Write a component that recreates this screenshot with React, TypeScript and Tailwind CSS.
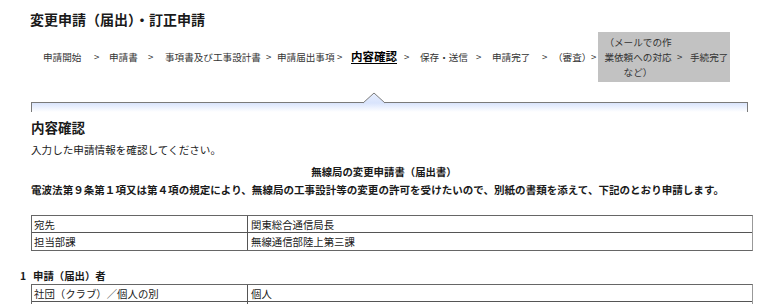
const steps: { label: string; w: number; current?: boolean }[] = [
  { label: "申請開始", w: 51 },
  { label: ">", w: 15 },
  { label: "申請書", w: 39 },
  { label: ">", w: 17 },
  { label: "事項書及び工事設計書", w: 101 },
  { label: ">", w: 11 },
  { label: "申請届出事項", w: 60 },
  { label: ">", w: 14 },
  { label: "内容確認", w: 53, current: true },
  { label: ">", w: 16 },
  { label: "保存・送信", w: 56 },
  { label: ">", w: 16 },
  { label: "申請完了", w: 50 },
  { label: ">", w: 11 },
  { label: "（審査）", w: 38 },
  { label: ">", w: 7 },
];

function InfoTable({ rows }: { rows: [string, string][] }) {
  return (
    <div className="ml-[31px] w-[722px] border border-[#666] border-r-[#999]">
      {rows.map(([k, v], i) => (
        <div
          key={i}
          className={`flex h-[17px] items-center text-[10.4px] leading-[17px] ${
            i < rows.length - 1 ? "border-b border-[#555]" : ""
          }`}
        >
          <div className="w-[216px] h-full pl-[2px] border-r border-[#555]">{k}</div>
          <div className="flex-1 pl-[3px]">{v}</div>
        </div>
      ))}
    </div>
  );
}

export default function App() {
  return (
    <div className="w-[780px] h-[304px] overflow-hidden bg-white text-[#1a1a1a] font-['Noto_Sans_CJK_JP',sans-serif]">
      <h1 className="pl-[30px] pt-[10px] text-[14px] font-bold leading-[18px]">
        変更申請（届出）・訂正申請
      </h1>

      {/* Progress steps */}
      <div className="mt-[4px] flex h-[50px] items-center pl-[43px] text-[9.6px] text-[#333]">
        {steps.map((s, i) => (
          <span
            key={i}
            style={{ width: s.w }}
            className={`shrink-0 whitespace-nowrap ${
              s.current ? "text-[11.5px] font-bold text-black underline underline-offset-2" : ""
            }`}
          >
            {s.label}
          </span>
        ))}
        <div className="flex h-[50px] w-[132px] shrink-0 items-center bg-[#c2c2c2] pl-[4px]">
          <span className="w-[72px] shrink-0 text-center leading-[15px]">
            （メールでの作業依頼への対応など）
          </span>
          <span className="ml-[3px] w-[13px] shrink-0">&gt;</span>
          <span className="whitespace-nowrap">手続完了</span>
        </div>
      </div>

      {/* Speech-bubble panel */}
      <div className="relative ml-[31px] mt-[20px] h-[10px] w-[717px] border-x border-t border-[#7a7a7a] bg-gradient-to-b from-[#d9e4fc] to-white">
        <svg
          className="absolute left-[331px] top-[-11px]"
          width="22"
          height="12"
          viewBox="0 0 22 12"
        >
          <defs>
            <linearGradient id="tri" x1="0" y1="0" x2="0" y2="1">
              <stop offset="0" stopColor="#e6edfd" />
              <stop offset="1" stopColor="#d9e4fc" />
            </linearGradient>
          </defs>
          <polygon points="0,11 11,1 22,11" fill="url(#tri)" />
          <polyline points="0,11 11,1 22,11" fill="none" stroke="#7a7a7a" strokeWidth="1" />
        </svg>
      </div>

      <h2 className="ml-[31px] mt-[6px] text-[13.5px] font-bold leading-[18px]">内容確認</h2>
      <p className="ml-[31px] mt-[6px] text-[10.6px] leading-[16px]">
        入力した申請情報を確認してください。
      </p>
      <p className="mt-[6px] pr-[12px] text-center text-[10.4px] font-bold leading-[16px]">
        無線局の変更申請書（届出書）
      </p>
      <p className="ml-[31px] mt-[2px] whitespace-nowrap text-[10.55px] font-bold leading-[16px]">
        電波法第９条第１項又は第４項の規定により、無線局の工事設計等の変更の許可を受けたいので、別紙の書類を添えて、下記のとおり申請します。
      </p>

      <div className="mt-[17px]">
        <InfoTable
          rows={[
            ["宛先", "関東総合通信局長"],
            ["担当部課", "無線通信部陸上第三課"],
          ]}
        />
      </div>

      <div className="mt-[17px] flex text-[10.4px] font-bold leading-[16px]">
        <span className="ml-[20px] w-[13px]">1</span>
        <span>申請（届出）者</span>
      </div>
      <InfoTable
        rows={[
          ["社団（クラブ）／個人の別", "個人"],
          ["", ""],
        ]}
      />
    </div>
  );
}
